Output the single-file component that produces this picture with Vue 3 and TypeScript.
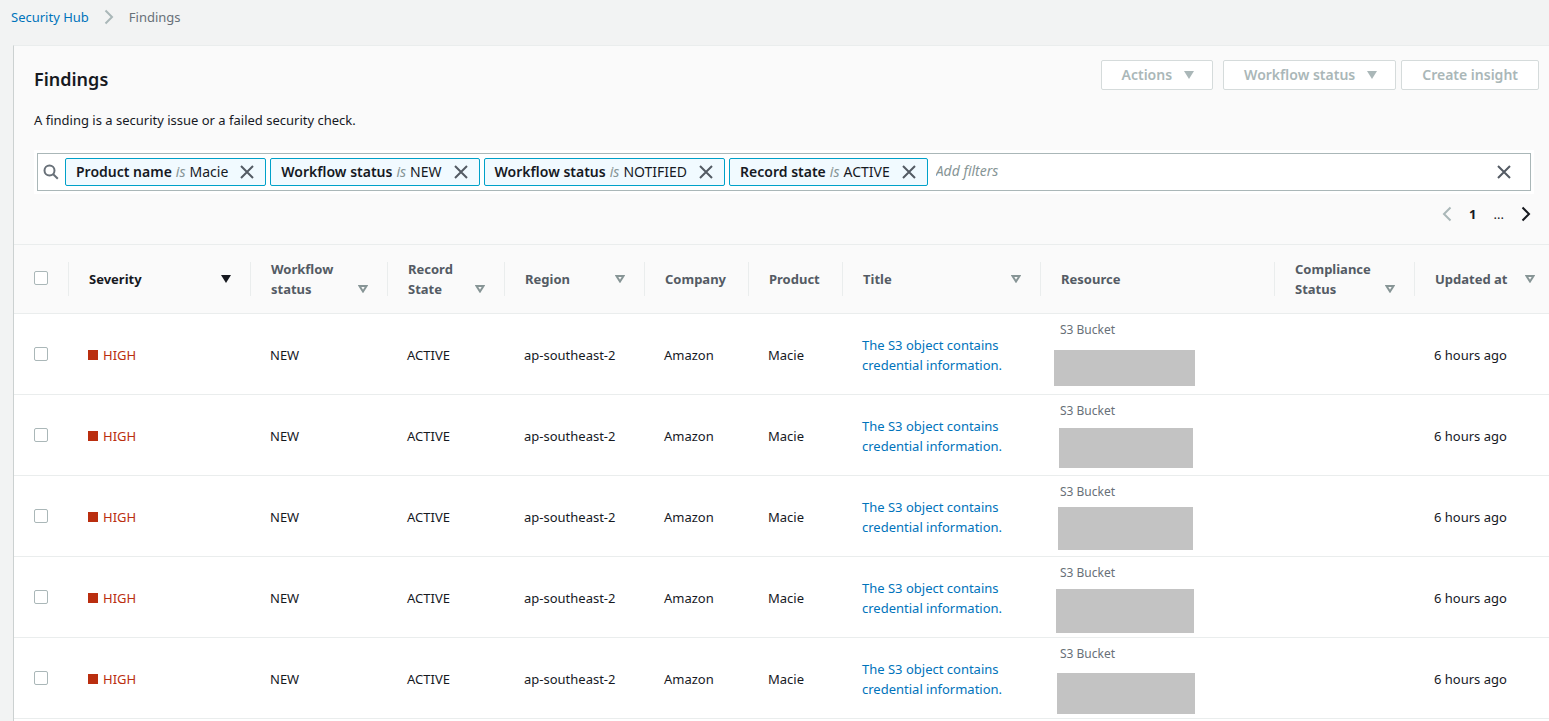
<script setup lang="ts">
import { ref } from 'vue'

interface Column {
  id: string
  label: string
  sort?: 'active' | 'idle'
}

interface Mask {
  left: number
  top: number
  width: number
  height: number
}

interface Finding {
  id: number
  selected: boolean
  mask: Mask
}

const filters = ref([
  { id: 1, field: 'Product name', value: 'Macie' },
  { id: 2, field: 'Workflow status', value: 'NEW' },
  { id: 3, field: 'Workflow status', value: 'NOTIFIED' },
  { id: 4, field: 'Record state', value: 'ACTIVE' },
])

const query = ref('')
const allSelected = ref(false)

const columns: Column[] = [
  { id: 'severity', label: 'Severity', sort: 'active' },
  { id: 'workflow', label: 'Workflow status', sort: 'idle' },
  { id: 'record', label: 'Record State', sort: 'idle' },
  { id: 'region', label: 'Region', sort: 'idle' },
  { id: 'company', label: 'Company' },
  { id: 'product', label: 'Product' },
  { id: 'title', label: 'Title', sort: 'idle' },
  { id: 'resource', label: 'Resource' },
  { id: 'compliance', label: 'Compliance Status', sort: 'idle' },
  { id: 'updated', label: 'Updated at', sort: 'idle' },
]

// Each mask hides the resource identifier; its box is relative to the cell.
const findings = ref<Finding[]>([
  { id: 1, selected: false, mask: { left: 13, top: 36, width: 141, height: 36 } },
  { id: 2, selected: false, mask: { left: 18, top: 33, width: 134, height: 40 } },
  { id: 3, selected: false, mask: { left: 17, top: 31, width: 135, height: 43 } },
  { id: 4, selected: false, mask: { left: 15, top: 32, width: 138, height: 44 } },
  { id: 5, selected: false, mask: { left: 16, top: 35, width: 138, height: 41 } },
])

function maskStyle(mask: Mask) {
  return {
    left: `${mask.left}px`,
    top: `${mask.top}px`,
    width: `${mask.width}px`,
    height: `${mask.height}px`,
  }
}

function removeFilter(id: number) {
  filters.value = filters.value.filter((f) => f.id !== id)
}

function clearFilters() {
  filters.value = []
  query.value = ''
}

function toggleAll() {
  findings.value.forEach((f) => (f.selected = allSelected.value))
}
</script>

<template>
  <div class="page">
    <nav class="breadcrumb" aria-label="Breadcrumb">
      <a href="#security-hub">Security Hub</a>
      <svg class="crumb-sep" width="10" height="16" viewBox="0 0 10 16" aria-hidden="true">
        <path d="M1.5 1.5 8 8l-6.500 6.500" />
      </svg>
      <span>Findings</span>
    </nav>

    <main class="panel">
      <header class="panel-head">
        <div class="title-row">
          <h1>Findings</h1>
          <div class="actions">
            <button type="button" class="btn menu" disabled>
              Actions
              <svg width="10" height="8" viewBox="0 0 10 8" aria-hidden="true"><path d="M0 0h10L5 8z" /></svg>
            </button>
            <div class="action-pair">
              <button type="button" class="btn menu" disabled>
                Workflow status
                <svg width="10" height="8" viewBox="0 0 10 8" aria-hidden="true"><path d="M0 0h10L5 8z" /></svg>
              </button>
              <button type="button" class="btn" disabled>Create insight</button>
            </div>
          </div>
        </div>
        <p class="lead">A finding is a security issue or a failed security check.</p>

        <div class="search">
          <svg class="search-icon" width="16" height="16" viewBox="0 0 16 16" aria-hidden="true">
            <circle cx="6.500" cy="6.500" r="5" />
            <path d="m10.200 10.200 4.600 4.600" />
          </svg>
          <span v-for="f in filters" :key="f.id" class="token">
            <span class="token-text"><b>{{ f.field }}</b> <i>is</i> <span>{{ f.value }}</span></span>
            <button type="button" class="close" :aria-label="`Remove ${f.field} filter`" @click="removeFilter(f.id)">
              <svg width="14" height="14" viewBox="0 0 14 14" aria-hidden="true"><path d="m1 1 12 12M13 1 1 13" /></svg>
            </button>
          </span>
          <input v-model="query" type="text" placeholder="Add filters" aria-label="Add filters" />
          <button type="button" class="close clear" aria-label="Clear filters" @click="clearFilters">
            <svg width="14" height="14" viewBox="0 0 14 14" aria-hidden="true"><path d="m1 1 12 12M13 1 1 13" /></svg>
          </button>
        </div>

        <nav class="pager" aria-label="Pagination">
          <button type="button" class="prev" disabled aria-label="Previous page">
            <svg width="10" height="16" viewBox="0 0 10 16" aria-hidden="true"><path d="M8.500 1.500 2 8l6.500 6.500" /></svg>
          </button>
          <button type="button" class="current" aria-current="page">1</button>
          <span>...</span>
          <button type="button" class="next" aria-label="Next page">
            <svg width="10" height="16" viewBox="0 0 10 16" aria-hidden="true"><path d="M1.500 1.500 8 8l-6.500 6.500" /></svg>
          </button>
        </nav>
      </header>

      <table>
        <colgroup>
          <col class="w-check" />
          <col v-for="c in columns" :key="c.id" :class="`w-${c.id}`" />
        </colgroup>
        <thead>
          <tr>
            <th>
              <div class="th check">
                <input v-model="allSelected" type="checkbox" aria-label="Select all findings" @change="toggleAll" />
              </div>
            </th>
            <th v-for="c in columns" :key="c.id" scope="col" :class="{ sorted: c.sort === 'active' }">
              <div class="th">
                <div class="th-label">
                  <span>{{ c.label }}</span>
                  <svg v-if="c.sort === 'active'" width="10" height="8" viewBox="0 0 10 8" aria-hidden="true">
                    <path d="M0 0h10L5 8z" />
                  </svg>
                  <svg v-else-if="c.sort" class="hollow" width="10" height="8" viewBox="0 0 10 8" aria-hidden="true">
                    <path d="M1.500 1h7L5 6.500z" />
                  </svg>
                </div>
              </div>
            </th>
          </tr>
        </thead>
        <tbody>
          <tr v-for="f in findings" :key="f.id">
            <td class="check">
              <input v-model="f.selected" type="checkbox" :aria-label="`Select finding ${f.id}`" />
            </td>
            <td><span class="severity">HIGH</span></td>
            <td>NEW</td>
            <td>ACTIVE</td>
            <td>ap-southeast-2</td>
            <td>Amazon</td>
            <td>Macie</td>
            <td><a href="#finding">The S3 object contains credential information.</a></td>
            <td class="resource">
              <small>S3 Bucket</small>
              <span class="mask" :style="maskStyle(f.mask)"></span>
            </td>
            <td></td>
            <td>6 hours ago</td>
          </tr>
        </tbody>
      </table>
    </main>
  </div>
</template>

<style>
body {
  margin: 0;
  background: #f2f3f3;
}
</style>

<style scoped>
* {
  box-sizing: border-box;
}

.page {
  display: flex;
  flex-direction: column;
  min-height: 100vh;
  overflow: hidden;
  color: #16191f;
  font: 13px/20px "Noto Sans", "Open Sans", sans-serif;
}

a {
  color: #0073bb;
  text-decoration: none;
}

button,
input {
  margin: 0;
  font: inherit;
}

svg {
  flex: none;
  fill: currentColor;
}

.breadcrumb {
  display: flex;
  align-items: center;
  gap: 15px;
  height: 45px;
  padding: 0 11px 11px;
  color: #687078;
}

.crumb-sep,
.pager svg {
  fill: none;
  stroke: currentColor;
  stroke-width: 2;
}

.crumb-sep {
  color: #aab7b8;
}

.panel {
  flex: 1;
  margin-left: 13px;
  border-top: 1px solid #eaeded;
  border-left: 1px solid #ccd1d1;
  background: #fff;
}

.panel-head {
  padding: 14px 10px 20px 20px;
  background: #fafafa;
}

.title-row {
  display: flex;
  justify-content: space-between;
  align-items: flex-start;
}

h1 {
  margin: 7px 0 0;
  font-size: 18px;
  font-weight: 600;
  line-height: 24px;
}

.actions {
  display: flex;
  gap: 10px;
}

.action-pair {
  display: flex;
  gap: 5px;
}

.btn {
  display: flex;
  align-items: center;
  gap: 12px;
  height: 30px;
  padding: 0 20px;
  border: 1px solid #d5dbdb;
  border-radius: 2px;
  background: #fff;
  color: #aab7b8;
  font-size: 14px;
  font-weight: 600;
}

.btn.menu {
  padding-right: 18px;
}

.lead {
  margin: 19px 0 0;
}

.search {
  display: flex;
  align-items: center;
  gap: 4px;
  height: 38px;
  margin: 23px 8px 0 3px;
  padding: 0 19px 0 5px;
  border: 1px solid #aab7b8;
  outline: 3px solid #fff;
  background: #fff;
  font-size: 14px;
}

.search-icon {
  margin-right: 2px;
  fill: none;
  stroke: #687078;
  stroke-width: 2;
}

.token {
  display: flex;
  align-items: center;
  gap: 12px;
  height: 28px;
  padding: 0 11px 0 10px;
  border: 1px solid #00a1c9;
  border-radius: 2px;
  background: #f1faff;
  white-space: nowrap;
}

.token-text {
  display: flex;
  align-items: baseline;
  gap: 4px;
}

.token b {
  font-weight: 600;
}

.token i {
  color: #879596;
}

.close {
  display: flex;
  padding: 0;
  border: 0;
  background: none;
  color: #545b64;
}

.close path {
  fill: none;
  stroke: currentColor;
  stroke-width: 2;
}

.search input {
  flex: 1;
  min-width: 0;
  padding: 0 4px 2px;
  border: 0;
  outline: 0;
  background: none;
}

.search input::placeholder {
  color: #879596;
  font-style: italic;
  opacity: 1;
}

.pager {
  display: flex;
  justify-content: flex-end;
  align-items: center;
  gap: 17px;
  margin-top: 13px;
  padding-right: 8px;
}

.pager button {
  display: flex;
  padding: 0;
  border: 0;
  background: none;
  color: #16191f;
}

.pager .prev {
  color: #aab7b8;
}

.pager .current {
  font-weight: 700;
}

table {
  width: 100%;
  border-collapse: separate;
  border-spacing: 0;
  table-layout: fixed;
}

.w-check { width: 55px; }
.w-severity { width: 182px; }
.w-workflow { width: 137px; }
.w-record { width: 117px; }
.w-region { width: 140px; }
.w-company { width: 104px; }
.w-product { width: 94px; }
.w-title { width: 198px; }
.w-resource { width: 234px; }
.w-compliance { width: 140px; }
.w-updated { width: 134px; }

th {
  height: 70px;
  padding: 0;
  border-top: 1px solid #eaeded;
  border-bottom: 1px solid #eaeded;
  background: #fafafa;
  color: #545b64;
  font-weight: 700;
  text-align: left;
}

.th {
  display: flex;
  align-items: center;
  height: 34px;
  padding: 0 19px 0 20px;
  border-right: 1px solid #eaeded;
}

th:last-child .th {
  padding-right: 14px;
  border-right: 0;
}

.th-label {
  display: flex;
  flex: 1;
  justify-content: space-between;
  align-items: flex-end;
  gap: 12px;
}

.th svg {
  margin-bottom: 6px;
}

.sorted {
  color: #16191f;
}

.hollow {
  fill: none;
  stroke: #879596;
  stroke-width: 2;
}

td {
  height: 81px;
  padding: 2px 19px 0;
  border-bottom: 1px solid #eaeded;
}

.check {
  padding: 0 0 0 20px;
}

.th.check {
  padding: 0 0 2px 20px;
}

.check input {
  display: block;
  width: 14px;
  height: 14px;
  appearance: none;
  border: 1px solid #aab7b8;
  border-radius: 2px;
  background: #fff;
}

.check input:checked {
  background: #0073bb;
}

.severity {
  display: flex;
  align-items: center;
  gap: 5px;
  color: #ba2e0f;
}

.severity::before {
  width: 10px;
  height: 10px;
  background: #ba2e0f;
  content: "";
}

.resource {
  position: relative;
  padding-top: 6px;
  vertical-align: top;
}

small {
  display: block;
  color: #687078;
  font-size: 12px;
}

.mask {
  position: absolute;
  background: #c3c3c3;
}
</style>
